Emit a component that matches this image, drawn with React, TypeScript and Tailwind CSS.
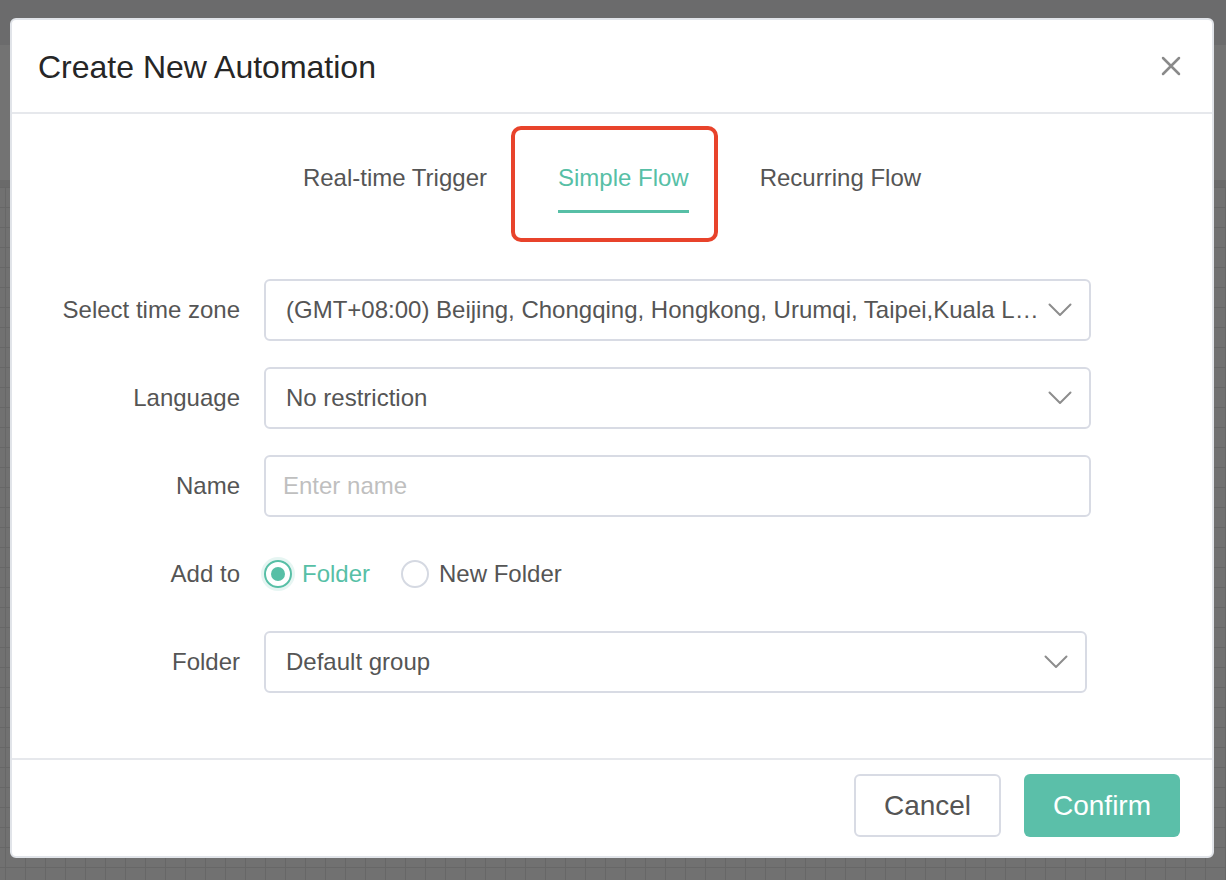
const TEAL = "text-[#57bfa6]"

function Chevron() {
  return (
    <svg width="24" height="14" viewBox="0 0 24 14" fill="none" className="shrink-0">
      <path d="M1.5 1.5 L12 12 L22.5 1.5" stroke="#8d8d8d" strokeWidth="2" strokeLinecap="round" strokeLinejoin="round" />
    </svg>
  )
}

function SelectBox({ value, className = "" }: { value: string; className?: string }) {
  return (
    <div className={`flex h-[62px] min-w-0 flex-1 items-center rounded-[6px] border-2 border-[#d8dbe4] bg-white pl-[20px] pr-[17px] ${className}`}>
      <span className="min-w-0 flex-1 whitespace-nowrap pr-[6px] text-[24px] text-[#555555]">{value}</span>
      <Chevron />
    </div>
  )
}

function Row({ label, children }: { label: string; children: React.ReactNode }) {
  return (
    <div className="flex h-[62px] items-center">
      <div className="w-[228px] shrink-0 text-right text-[24px] text-[#555555]">{label}</div>
      <div className="ml-[24px] flex min-w-0 flex-1 items-center">{children}</div>
    </div>
  )
}

function Radio({ label, checked }: { label: string; checked?: boolean }) {
  return (
    <label className="flex items-center">
      {checked ? (
        <span className="flex h-[28px] w-[28px] items-center justify-center rounded-full border-2 border-[#57bfa6] shadow-[0_0_0_3px_rgba(87,191,166,0.15)]">
          <span className="h-[14px] w-[14px] rounded-full bg-[#57bfa6]" />
        </span>
      ) : (
        <span className="h-[28px] w-[28px] rounded-full border-2 border-[#d5d9e2] bg-white" />
      )}
      <span className={`ml-[10px] text-[24px] ${checked ? TEAL : "text-[#555555]"}`}>{label}</span>
    </label>
  )
}

export default function App() {
  return (
    <div className="relative h-[880px] w-[1226px] overflow-hidden font-['Liberation_Sans',Arial,sans-serif]">
      {/* dimmed page behind the modal */}
      <div className="flex h-full flex-col">
        <div className="h-[45px] bg-[#6b6b6c]" />
        <div className="h-[135px] bg-[#737373]" />
        <div className="h-[7px] bg-[#6a6a6a]" />
        <div className="flex-1 bg-[#717171] bg-[linear-gradient(to_right,#676767_1px,transparent_1px),linear-gradient(to_bottom,#676767_1px,transparent_1px)] bg-[size:20px_20px] bg-[position:5px_0px]" />
      </div>

      <div className="absolute left-[10px] top-[18px] flex h-[840px] w-[1204px] flex-col rounded-[6px] border-2 border-[#e1e4e9] bg-white">
        <div className="flex h-[94px] shrink-0 items-center justify-between border-b-2 border-[#e6e8ec] pl-[26px] pr-[29px]">
          <h1 className="pt-[2px] text-[32px] text-[#262626]">Create New Automation</h1>
          <button className="flex h-[24px] w-[24px] items-center justify-center">
            <svg width="20" height="20" viewBox="0 0 20 20">
              <path d="M2 2 L18 18 M18 2 L2 18" stroke="#8a8a8a" strokeWidth="2.5" strokeLinecap="round" />
            </svg>
          </button>
        </div>

        <div className="flex-1">
          <div className="flex justify-center gap-[71px] pt-[50px]">
            <div className="flex flex-col items-center">
              <span className="text-[24px] leading-[28px] text-[#555555]">Real-time Trigger</span>
            </div>
            <div className="relative flex flex-col items-center">
              <span className={`text-[24px] leading-[28px] ${TEAL}`}>Simple Flow</span>
              <span className="mt-[18px] h-[3px] w-full bg-[#57bfa6]" />
              <div className="absolute left-[-47px] top-[-38px] h-[116px] w-[207px] rounded-[10px] border-4 border-[#e8432b]" />
            </div>
            <div className="flex flex-col items-center">
              <span className="text-[24px] leading-[28px] text-[#555555]">Recurring Flow</span>
            </div>
          </div>

          <div className="mt-[66px] flex flex-col gap-[26px] pr-[121px]">
            <Row label="Select time zone">
              <SelectBox value="(GMT+08:00) Beijing, Chongqing, Hongkong, Urumqi, Taipei,Kuala L…" />
            </Row>
            <Row label="Language">
              <SelectBox value="No restriction" />
            </Row>
            <Row label="Name">
              <input
                placeholder="Enter name"
                className="h-[62px] min-w-0 flex-1 rounded-[6px] border-2 border-[#d8dbe4] pl-[17px] text-[24px] text-[#555555] outline-none placeholder:text-[#bfbfbf]"
              />
            </Row>
            <Row label="Add to">
              <div className="flex items-center gap-[31px]">
                <Radio label="Folder" checked />
                <Radio label="New Folder" />
              </div>
            </Row>
            <Row label="Folder">
              <SelectBox value="Default group" className="mr-[4px]" />
            </Row>
          </div>
        </div>

        <div className="flex h-[98px] shrink-0 items-start justify-end gap-[23px] border-t-2 border-[#e6e8ec] pr-[32px] pt-[14px]">
          <button className="h-[63px] w-[147px] rounded-[6px] border-2 border-[#d8dbe4] bg-white text-[28px] text-[#555555]">
            Cancel
          </button>
          <button className="h-[63px] w-[156px] rounded-[6px] bg-[#5bbfa9] text-[28px] text-white">Confirm</button>
        </div>
      </div>
    </div>
  )
}
